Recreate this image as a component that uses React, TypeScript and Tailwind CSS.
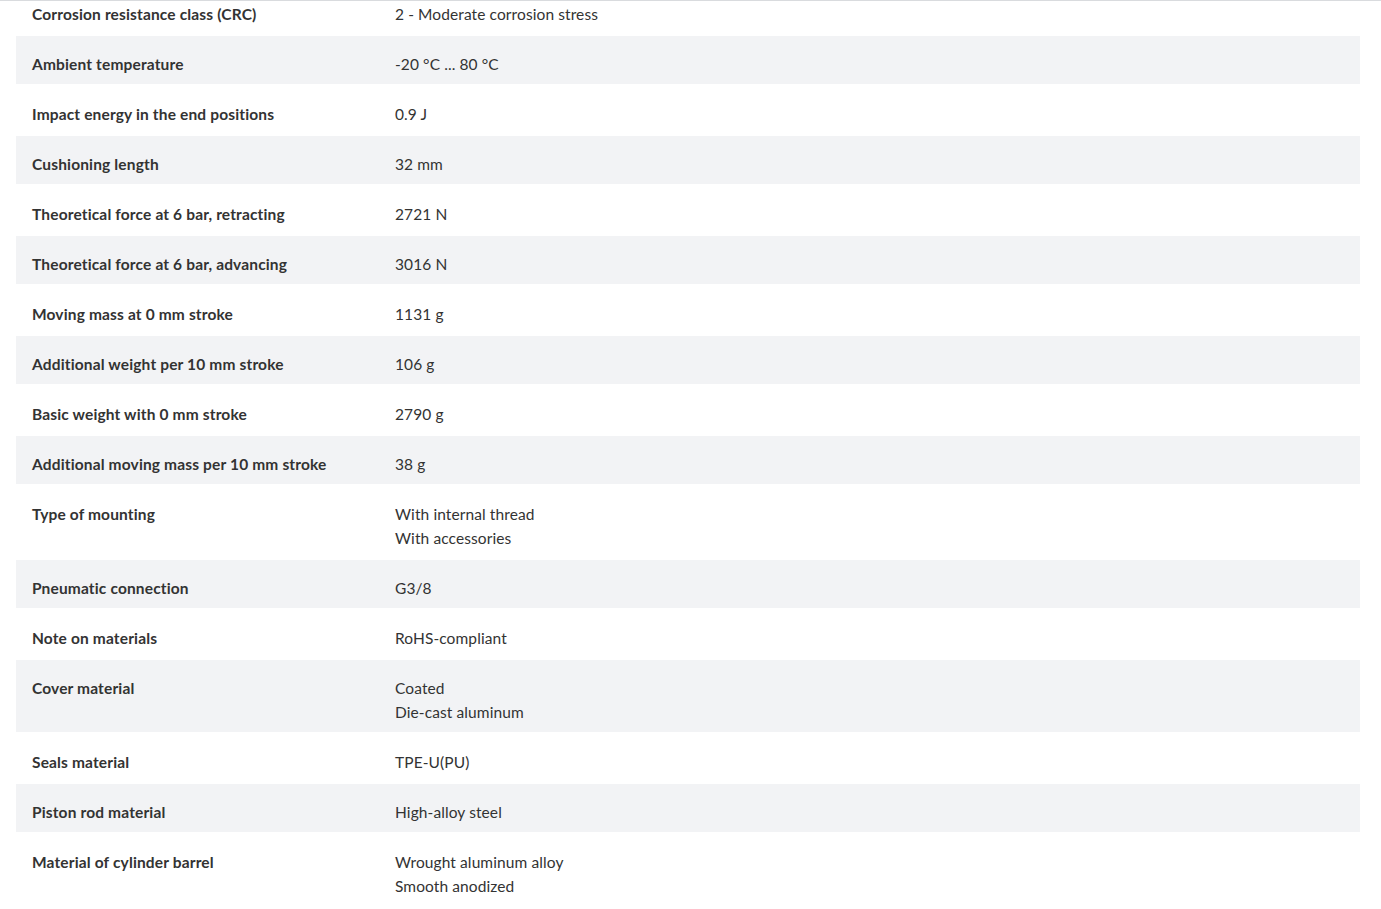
const rows: { label: string; value: string[] }[] = [
  { label: "Corrosion resistance class (CRC)", value: ["2 - Moderate corrosion stress"] },
  { label: "Ambient temperature", value: ["-20 °C ... 80 °C"] },
  { label: "Impact energy in the end positions", value: ["0.9 J"] },
  { label: "Cushioning length", value: ["32 mm"] },
  { label: "Theoretical force at 6 bar, retracting", value: ["2721 N"] },
  { label: "Theoretical force at 6 bar, advancing", value: ["3016 N"] },
  { label: "Moving mass at 0 mm stroke", value: ["1131 g"] },
  { label: "Additional weight per 10 mm stroke", value: ["106 g"] },
  { label: "Basic weight with 0 mm stroke", value: ["2790 g"] },
  { label: "Additional moving mass per 10 mm stroke", value: ["38 g"] },
  { label: "Type of mounting", value: ["With internal thread", "With accessories"] },
  { label: "Pneumatic connection", value: ["G3/8"] },
  { label: "Note on materials", value: ["RoHS-compliant"] },
  { label: "Cover material", value: ["Coated", "Die-cast aluminum"] },
  { label: "Seals material", value: ["TPE-U(PU)"] },
  { label: "Piston rod material", value: ["High-alloy steel"] },
  { label: "Material of cylinder barrel", value: ["Wrought aluminum alloy", "Smooth anodized"] },
];

export default function App() {
  return (
    <div className="relative min-h-screen overflow-hidden bg-white text-[15.5px] leading-6 text-[#333] [font-family:Lato,'Open_Sans',sans-serif]">
      <div className="absolute inset-x-0 top-0 z-10 h-px bg-[#d9dbde]" />
      <div className="-mt-[14px] flex flex-col gap-[2px] pl-4 pr-[21px]">
        {rows.map((r, i) => (
          <div key={i} className={`flex pt-[16px] pb-2 ${i % 2 === 1 ? "bg-[#f2f3f5]" : "bg-white"}`}>
            <div className="w-[363px] shrink-0 pl-4 font-bold tracking-[0.15px]">{r.label}</div>
            <div className="pl-4 tracking-[0.1px]">
              {r.value.map((v, j) => (
                <div key={j}>{v}</div>
              ))}
            </div>
          </div>
        ))}
      </div>
    </div>
  );
}
